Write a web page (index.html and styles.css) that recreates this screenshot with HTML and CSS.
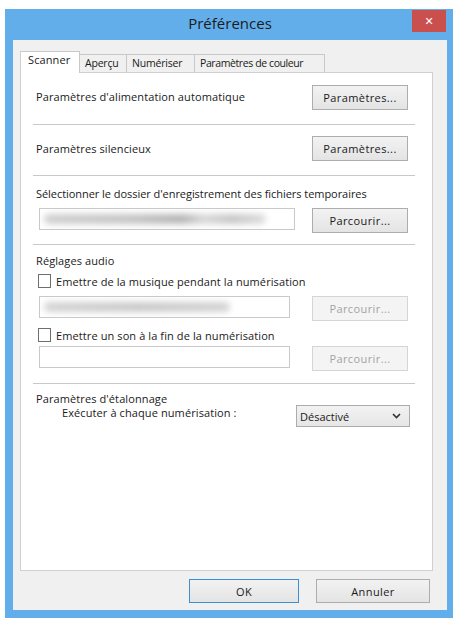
FILE: index.html
```html
<!DOCTYPE html>
<html lang="fr">

<head>
    <meta charset="UTF-8">
    <meta name="viewport" content="width=device-width, initial-scale=1.0">
    <title>Préférences</title>
    <link rel="stylesheet" href="styles.css">
</head>

<body>

    <div class="window">
        <div class="titlebar">
            <span></span>
            <div class="title">Préférences</div>
            <button class="close-btn">&#x2715;</button>
        </div>

        <div class="client">
            <div class="tabs">
                <div class="tab active">Scanner</div>
                <div class="tab">Aperçu</div>
                <div class="tab">Numériser</div>
                <div class="tab">Paramètres de couleur</div>
            </div>

            <div class="panel">
                <div class="row row-first">
                    <span class="label">Paramètres d'alimentation automatique</span>
                    <button class="btn">Paramètres...</button>
                </div>
                <hr class="sep sep-1">
                <div class="row row-second">
                    <span class="label">Paramètres silencieux</span>
                    <button class="btn">Paramètres...</button>
                </div>
                <hr class="sep sep-1">

                <div class="label label-block">Sélectionner le dossier d'enregistrement des fichiers temporaires</div>
                <div class="row field-row">
                    <div class="field wide">
                        <span class="blur blur-a"></span>
                    </div>
                    <button class="btn">Parcourir...</button>
                </div>
                <hr class="sep sep-2">

                <div class="label label-audio">Réglages audio</div>
                <label class="check-row">
                    <span class="checkbox"></span>
                    <span>Emettre de la musique pendant la numérisation</span>
                </label>
                <div class="row field-row field-row-2">
                    <div class="field">
                        <span class="blur blur-b"></span>
                    </div>
                    <button class="btn" disabled>Parcourir...</button>
                </div>
                <label class="check-row check-row-2">
                    <span class="checkbox"></span>
                    <span>Emettre un son à la fin de la numérisation</span>
                </label>
                <div class="row field-row field-row-3">
                    <div class="field"></div>
                    <button class="btn" disabled>Parcourir...</button>
                </div>
                <hr class="sep sep-3">

                <div class="calib">
                    <div class="calib-labels">
                        <div class="label">Paramètres d'étalonnage</div>
                        <div class="label sub-label">Exécuter à chaque numérisation :</div>
                    </div>
                    <div class="select">
                        <span>Désactivé</span>
                        <svg width="9" height="6" viewBox="0 0 9 6">
                            <path d="M1 1 L4.5 4.5 L8 1" fill="none" stroke="#333" stroke-width="1.6"/>
                        </svg>
                    </div>
                </div>
            </div>

            <div class="footer">
                <button class="btn footer-btn default">OK</button>
                <button class="btn footer-btn">Annuler</button>
            </div>
        </div>
    </div>

</body>

</html>
```

FILE: styles.css
```css
* {
    margin: 0;
    padding: 0;
    box-sizing: border-box;
}

body {
    font-family: "Open Sans", "Noto Sans", sans-serif;
    font-size: 11px;
    color: #1a1a1a;
    background-color: #ffffff;
}

.window {
    margin: 9px 0 0 5px;
    width: 448px;
    height: 609px;
    background-color: #62aeea;
    padding: 0 6px 8px 8px;
    display: flex;
    flex-direction: column;
}

.titlebar {
    height: 31px;
    display: grid;
    grid-template-columns: 1fr auto 1fr;
    align-items: start;
}

.title {
    font-size: 15px;
    color: #1b1b1b;
    padding-top: 4px;
}

.close-btn {
    justify-self: end;
    margin: 1px 1px 0 0;
    width: 34px;
    height: 22px;
    border: none;
    background-color: #c9504d;
    color: #ffffff;
    font-size: 11px;
    font-weight: bold;
    font-family: "DejaVu Sans", sans-serif;
}

.client {
    flex: 1;
    background-color: #f0f0f0;
    padding: 11px 14px 0 7px;
    display: flex;
    flex-direction: column;
}

/* onglets */
.tabs {
    display: flex;
    align-items: flex-end;
    height: 21px;
}

.tab {
    height: 18px;
    padding: 0 5px;
    border: 1px solid #c8c8c8;
    border-bottom: none;
    border-left: none;
    background-color: #f0f0f0;
    line-height: 16px;
    font-size: 10.5px;
    letter-spacing: -0.2px;
    white-space: nowrap;
}

.tab.active {
    height: 22px;
    margin-bottom: -1px;
    width: 60px;
    padding: 0 0 0 7px;
    border-left: 1px solid #d0d0d0;
    background-color: #ffffff;
    position: relative;
    z-index: 1;
    font-size: 11px;
    letter-spacing: 0.1px;
}

.tab:nth-child(2) { width: 47px; }
.tab:nth-child(3) { width: 68px; }
.tab:nth-child(4) { width: 130px; letter-spacing: -0.4px; }

.panel {
    height: 499px;
    background-color: #ffffff;
    border: 1px solid #d0d0d0;
    padding: 11px 17px 0 12px;
}

.label {
    letter-spacing: 0.1px;
    line-height: 14px;
    white-space: nowrap;
}

.row {
    display: flex;
    justify-content: space-between;
    align-items: center;
}

.row-first {
    height: 26px;
    padding-left: 3px;
}

.row-second {
    margin-top: 11px;
    height: 25px;
    padding-left: 3px;
}

.sep {
    border: none;
    border-top: 1px solid #c8c8c8;
}

.sep-1 { margin-top: 14px; }
.sep-2 { margin-top: 12px; }
.sep-3 { margin-top: 13px; }

.label-block {
    margin-top: 11px;
    padding-left: 3px;
    letter-spacing: -0.05px;
}

.btn {
    width: 96px;
    height: 25px;
    font-family: inherit;
    font-size: 11px;
    letter-spacing: 0.4px;
    color: #1a1a1a;
    border: 1px solid #adadad;
    background: linear-gradient(#f2f2f2, #e4e4e4);
    margin-right: 7px;
}

.btn:disabled {
    color: #a3a3a3;
    border-color: #d5d5d5;
    background: #f4f4f4;
}

.field-row {
    margin-top: 7px;
    height: 24px;
    padding-left: 6px;
    align-items: flex-start;
}

.field {
    width: 251px;
    height: 22px;
    border: 1px solid #c9c9c9;
    background-color: #ffffff;
    padding: 5px 4px;
    overflow: hidden;
}

.field.wide {
    width: 256px;
}

.blur {
    display: block;
    height: 10px;
    border-radius: 5px;
    filter: blur(3px);
}

.blur-a {
    width: 222px;
    background: linear-gradient(to right, #cfcfcf, #c4c4c4 40%, #b5b5b5 62%, #d8d8d8 72%, #c6c6c6 85%, #dddddd);
}

.blur-b {
    width: 186px;
    background: linear-gradient(to right, #d4d4d4, #cacaca 50%, #d3d3d3);
}

.label-audio {
    margin-top: 9px;
    padding-left: 3px;
}

.check-row {
    margin-top: 5px;
    height: 16px;
    display: flex;
    align-items: center;
    gap: 5px;
    padding-left: 5px;
    letter-spacing: 0.1px;
    white-space: nowrap;
}

.checkbox {
    width: 13px;
    height: 14px;
    border: 1px solid #6e6e6e;
    background-color: #ffffff;
}

.field-row-2 {
    margin-top: 7px;
}

.check-row-2 {
    margin-top: 7px;
}

.field-row-3 {
    margin-top: 3px;
}

.calib {
    margin-top: 8px;
    display: flex;
    justify-content: space-between;
    padding-left: 3px;
}

.sub-label {
    padding-left: 26px;
}

.select {
    margin-top: 13px;
    margin-right: 5px;
    width: 114px;
    height: 22px;
    border: 1px solid #acacac;
    background: linear-gradient(#f2f2f2, #e6e6e6);
    display: flex;
    justify-content: space-between;
    align-items: center;
    padding: 0 8px 0 3px;
}

.footer {
    display: flex;
    justify-content: flex-end;
    gap: 17px;
    padding-top: 8px;
}

.footer-btn {
    width: 114px;
    height: 24px;
    margin-right: 3px;
}

.footer-btn.default {
    width: 110px;
    margin-right: 0;
    border-color: #3d8ed1;
}
```
